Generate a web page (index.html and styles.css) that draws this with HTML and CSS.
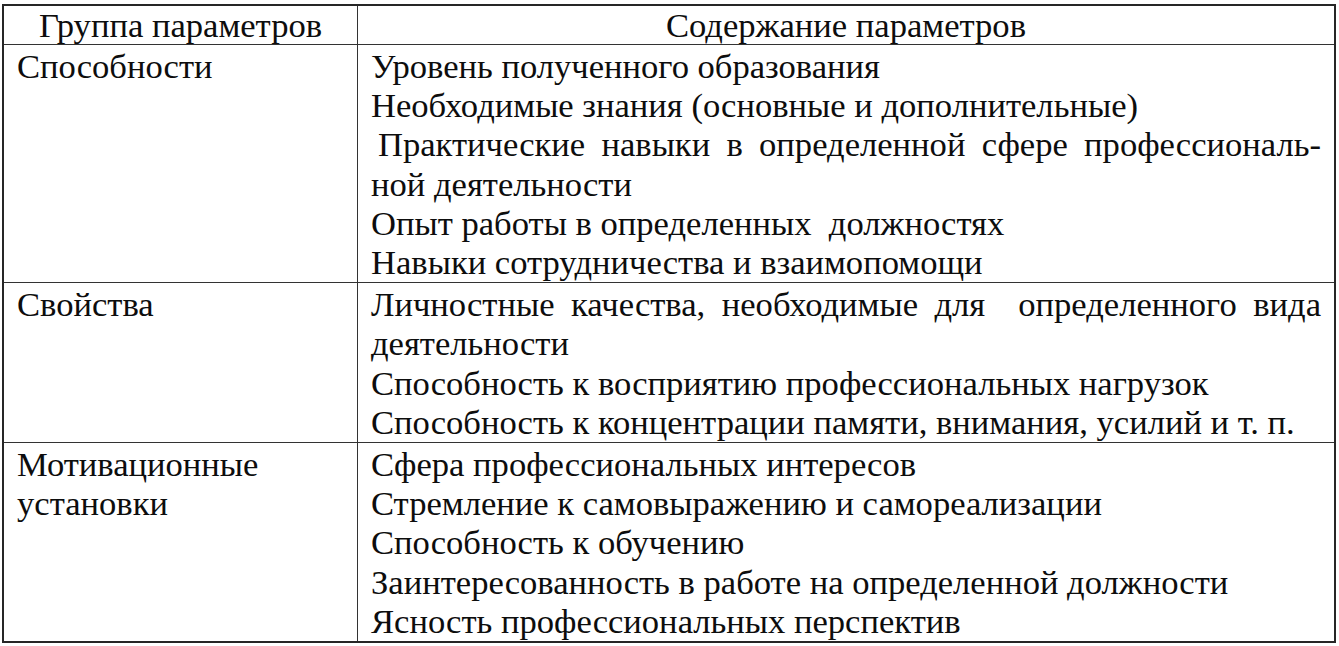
FILE: index.html
```html
<!DOCTYPE html>
<html lang="ru">
<head>
<meta charset="utf-8">
<link rel="stylesheet" href="styles.css">
</head>
<body>
<div class="params">
  <div class="row head">
    <div class="cell group-cell">Группа параметров</div>
    <div class="cell">Содержание параметров</div>
  </div>
  <div class="row">
    <div class="cell group-cell">Способности</div>
    <div class="cell content">
      <div class="line">Уровень полученного образования</div>
      <div class="line">Необходимые знания (основные и дополнительные)</div>
      <div class="line just indent">Практические навыки в определенной сфере профессиональ-</div>
      <div class="line">ной деятельности</div>
      <div class="line">Опыт работы в определенных&nbsp; должностях</div>
      <div class="line">Навыки сотрудничества и взаимопомощи</div>
    </div>
  </div>
  <div class="row">
    <div class="cell group-cell">Свойства</div>
    <div class="cell content">
      <div class="line just">Личностные качества, необходимые для&nbsp; определенного вида</div>
      <div class="line">деятельности</div>
      <div class="line">Способность к восприятию профессиональных нагрузок</div>
      <div class="line">Способность к концентрации памяти, внимания, усилий и т. п.</div>
    </div>
  </div>
  <div class="row">
    <div class="cell group-cell">
      <div class="line">Мотивационные</div>
      <div class="line">установки</div>
    </div>
    <div class="cell content">
      <div class="line">Сфера профессиональных интересов</div>
      <div class="line">Стремление к самовыражению и самореализации</div>
      <div class="line">Способность к обучению</div>
      <div class="line">Заинтересованность в работе на определенной должности</div>
      <div class="line">Ясность профессиональных перспектив</div>
    </div>
  </div>
</div>
</body>
</html>
```

FILE: styles.css
```css
html, body {
  margin: 0;
  padding: 0;
  background: #ffffff;
}

body {
  padding: 4px 0 0 2px;
}

.params {
  width: 1334px;
  box-sizing: border-box;
  border: 2px solid #262626;
  font-family: "Liberation Serif", serif;
  font-size: 34.6px;
  line-height: 39.2px;
  color: #0d0d0d;
}

.row {
  display: grid;
  grid-template-columns: 354px 1fr;
  border-bottom: 1.5px solid #333333;
}

.row:last-child {
  border-bottom: none;
}

.cell {
  padding: 2px 13px 0 13px;
}

.group-cell {
  border-right: 1.5px solid #333333;
}

.head {
  height: 38px;
  text-align: center;
}

.head .cell {
  padding: 0;
}

.line {
  white-space: nowrap;
}

.line.just {
  white-space: normal;
  text-align: justify;
  text-align-last: justify;
}

.line.indent {
  padding-left: 7px;
}
```
